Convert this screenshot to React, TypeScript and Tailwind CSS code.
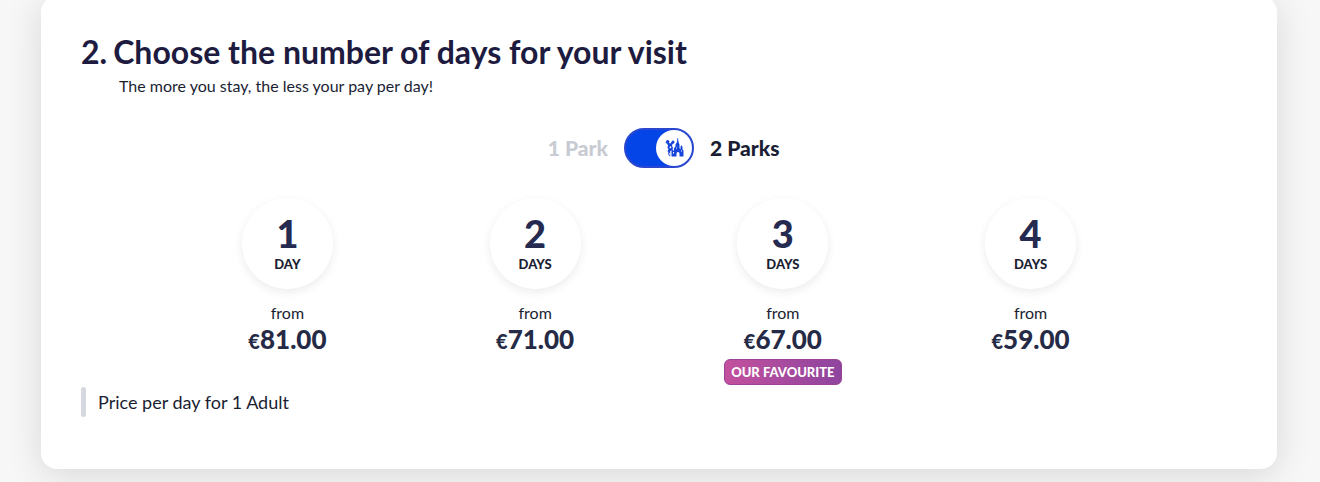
import { useState } from 'react';

type Offer = { days: number; price: string; favourite?: boolean };

const offers: Offer[] = [
  { days: 1, price: '81.00' },
  { days: 2, price: '71.00' },
  { days: 3, price: '67.00', favourite: true },
  { days: 4, price: '59.00' },
];

function CastleIcon() {
  return (
    <svg viewBox="0 0 38 40" className="h-5 w-[19px]" fill="#1745dc" aria-hidden="true">
      <path d="M3 5C5 3 8 4 9 7l-1 3 3 1 3-5c2-2 5-1 5 2 0 2-2 4-4 4l-1 4 2 3-1 5-5 3 1 4-3-1-3-4 2-3-2-4 1-4-2-4-3-1Z" />
      <path d="M25 0h1l1 8 2 5v7l2 3v-5l2-4 2 4v5l2 2v12h-8v-6a3 3 0 0 0-6 0v6H13V26l2-3 3 3v-6l3-3v-4l3-5Z" />
      <path d="m6 28 3 5 2 1-1 3-4-5Z" />
      <path d="M22 18h1v4h-1zM16 28h2v3h-2zM32 24h1v4h-1z" fill="#fff" />
      <path d="m10 16 3 2-2 3-2-1Z" fill="#fff" />
    </svg>
  );
}

function DayOffer({ offer, selected, onSelect }: { offer: Offer; selected: boolean; onSelect: () => void }) {
  return (
    <li className="flex flex-col items-center">
      <button
        type="button"
        aria-pressed={selected}
        onClick={onSelect}
        className="flex size-[91px] flex-col items-center rounded-full bg-white pt-3 shadow-[0_3px_10px_rgba(0,0,0,0.08)]"
      >
        <span className="text-[38px] leading-[46px] font-black text-[#252b50]">{offer.days}</span>
        <span className="text-[13px] leading-4 font-black">{offer.days === 1 ? 'DAY' : 'DAYS'}</span>
      </button>
      <span className="mt-3 text-base leading-6">from</span>
      <span className="text-[26px] leading-7 font-black text-[#252b46]">
        <span className="text-xl">€</span>
        {offer.price}
      </span>
      {offer.favourite && (
        <span className="mt-1 rounded-md border border-[#984397] bg-linear-to-r from-[#c3509d] to-[#8e449e] px-1.5 text-[13px] leading-6 font-black whitespace-nowrap text-white">
          OUR FAVOURITE
        </span>
      )}
    </li>
  );
}

export default function App() {
  const [twoParks, setTwoParks] = useState(true);
  const [selected, setSelected] = useState<number | null>(null);

  return (
    <main className="overflow-hidden bg-[#f7f7f7] pr-[43px] pb-[13px] pl-[41px] font-['Lato',sans-serif] text-[#1b1e33]">
      <section className="-mt-1 rounded-2xl bg-white px-10 pt-9 pb-[52px] shadow-[0_6px_36px_rgba(0,0,0,0.13)]">
        <h2 className="flex gap-1.5 text-[32px] leading-10 font-bold text-[#1e1b40]">
          <span>2.</span>
          <span>Choose the number of days for your visit</span>
        </h2>
        <p className="mt-0.5 pl-[38px] text-base leading-6">The more you stay, the less your pay per day!</p>

        <div className="mt-[30px] grid grid-cols-[1fr_auto_1fr] items-center gap-4 text-[21px] leading-7 font-black">
          <span className={twoParks ? 'text-right text-[#c8cbd3]' : 'text-right'}>1 Park</span>
          <button
            type="button"
            role="switch"
            aria-checked={twoParks}
            aria-label="2 Parks"
            onClick={() => setTwoParks(!twoParks)}
            className={
              twoParks
                ? 'flex h-10 w-[70px] items-center justify-end rounded-full border-2 border-[#2b47cf] bg-[#0445e8]'
                : 'flex h-10 w-[70px] items-center justify-start rounded-full border-2 border-[#2b47cf] bg-[#0445e8]'
            }
          >
            <span className="flex size-9 items-center justify-center rounded-full bg-white">
              <CastleIcon />
            </span>
          </button>
          <span className={twoParks ? '' : 'text-[#c8cbd3]'}>2 Parks</span>
        </div>

        <ul className="mx-auto mt-[30px] grid w-6/7 grid-cols-4">
          {offers.map((offer) => (
            <DayOffer
              key={offer.days}
              offer={offer}
              selected={selected === offer.days}
              onSelect={() => setSelected(offer.days)}
            />
          ))}
        </ul>

        <p className="mt-0.5 flex items-center gap-3 text-lg leading-7">
          <span className="h-[30px] w-[5px] rounded-full bg-[#d5d8df]" />
          Price per day for 1 Adult
        </p>
      </section>
    </main>
  );
}
